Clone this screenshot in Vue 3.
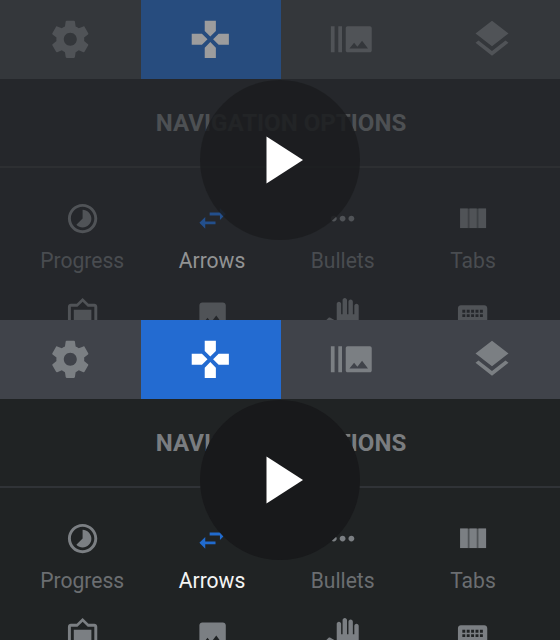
<script setup>
const tabs = [
  { name: 'settings', d: 'M19.43 12.98c.04-.32.07-.64.07-.98s-.03-.66-.07-.98l2.11-1.65c.19-.15.24-.42.12-.64l-2-3.46c-.12-.22-.39-.3-.61-.22l-2.49 1c-.52-.4-1.08-.73-1.69-.98l-.38-2.65C14.46 2.18 14.25 2 14 2h-4c-.25 0-.46.18-.49.42l-.38 2.65c-.61.25-1.17.59-1.69.98l-2.49-1c-.23-.09-.49 0-.61.22l-2 3.46c-.13.22-.07.49.12.64l2.11 1.65c-.04.32-.07.65-.07.98s.03.66.07.98l-2.11 1.65c-.19.15-.24.42-.12.64l2 3.46c.12.22.39.3.61.22l2.49-1c.52.4 1.08.73 1.69.98l.38 2.65c.03.24.24.42.49.42h4c.25 0 .46-.18.49-.42l.38-2.65c.61-.25 1.17-.59 1.69-.98l2.49 1c.23.09.49 0 .61-.22l2-3.46c.12-.22.07-.49-.12-.64l-2.11-1.65zM12 15.5c-1.93 0-3.5-1.57-3.5-3.5s1.57-3.5 3.5-3.5 3.5 1.57 3.5 3.5-1.57 3.5-3.5 3.5z' },
  { name: 'navigation', active: true, d: 'M15 7.5V2H9v5.5l3 3 3-3zM7.5 9H2v6h5.5l3-3-3-3zM9 16.5V22h6v-5.5l-3-3-3 3zM16.5 9l-3 3 3 3H22V9h-5.500z' },
  { name: 'slides', d: 'M1 5h2v14H1zm4 0h2v14H5zm17 0H10c-.55 0-1 .45-1 1v12c0 .55.45 1 1 1h12c.55 0 1-.45 1-1V6c0-.55-.45-1-1-1zM11 17l2.500-3.150L15.290 16l2.500-3.220L21 17H11z' },
  { name: 'layers', d: 'M11.990 18.540l-7.370-5.730L3 14.070l9 7 9-7-1.630-1.270-7.380 5.740zM12 16l7.360-5.730L21 9l-9-7-9 7 1.630 1.270L12 16z' },
]
const options = [
  { label: 'Progress', d: 'M16.240 7.760C15.070 6.590 13.540 6 12 6v6l-4.240 4.240c2.340 2.340 6.140 2.340 8.490 0 2.340-2.340 2.340-6.140-.010-8.480zM12 2C6.480 2 2 6.480 2 12s4.480 10 10 10 10-4.480 10-10S17.520 2 12 2zm0 18c-4.420 0-8-3.580-8-8s3.580-8 8-8 8 3.580 8 8-3.580 8-8 8z' },
  { label: 'Arrows', active: true, d: 'M6.990 10.900L3 14.900l3.990 4v-3H14v-2H6.990v-3zM21 8.900l-3.990-4v3H10v2h7.010v3L21 8.900z' },
  { label: 'Bullets', d: 'M6 10c-1.100 0-2 .9-2 2s.9 2 2 2 2-.9 2-2-.9-2-2-2zm12 0c-1.100 0-2 .9-2 2s.9 2 2 2 2-.9 2-2-.9-2-2-2zm-6 0c-1.100 0-2 .9-2 2s.9 2 2 2 2-.9 2-2-.9-2-2-2z' },
  { label: 'Tabs', columns: true },
]
const extras = [
  { name: 'frame', d: 'M20 4h-4l-4-4-4 4H4c-1.100 0-2 .9-2 2v14c0 1.100.9 2 2 2h16c1.100 0 2-.9 2-2V6c0-1.100-.9-2-2-2zm0 16H4V6h4.520l3.520-3.500L15.520 6H20v14zM18 8H6v10h12z' },
  { name: 'image', d: 'M21 19V5c0-1.100-.9-2-2-2H5c-1.100 0-2 .9-2 2v14c0 1.100.9 2 2 2h14c1.100 0 2-.9 2-2zM8.500 13.500l2.500 3.010L14.500 12l4.500 6H5l3.500-4.500z' },
  { name: 'hand', d: 'M23 5.500V20c0 2.200-1.800 4-4 4h-7.300c-1.080 0-2.100-.43-2.850-1.190L1 14.830s1.260-1.230 1.300-1.250c.22-.19.49-.29.79-.29.22 0 .42.06.6.16.04.01 4.310 2.460 4.310 2.460V4c0-.83.67-1.500 1.500-1.500S11 3.170 11 4v7h1V1.500c0-.83.67-1.500 1.500-1.500S15 .67 15 1.500V11h1V2.500c0-.83.67-1.500 1.500-1.500s1.500.67 1.500 1.500V11h1V5.500c0-.83.67-1.500 1.500-1.500s1.500.67 1.500 1.500z' },
  { name: 'keyboard', d: 'M20 5H4c-1.100 0-1.990.9-1.990 2L2 17c0 1.100.9 2 2 2h16c1.100 0 2-.9 2-2V7c0-1.100-.9-2-2-2zm-9 3h2v2h-2V8zm0 3h2v2h-2v-2zM8 8h2v2H8V8zm0 3h2v2H8v-2zm-1 2H5v-2h2v2zm0-3H5V8h2v2zm9 7H8v-2h8v2zm0-4h-2v-2h2v2zm0-3h-2V8h2v2zm3 3h-2v-2h2v2zm0-3h-2V8h2v2z' },
]
</script>

<template>
  <main class="page">
    <section v-for="state in ['dimmed', 'bright']" :key="state" class="panel" :class="state">
      <nav class="tabs">
        <div v-for="t in tabs" :key="t.name" class="tab" :class="[{ active: t.active }, t.name]">
          <svg viewBox="0 0 24 24"><path :d="t.d" /></svg>
        </div>
      </nav>
      <h2><span>NAVIGATION OPTIONS</span></h2>
      <div class="options">
        <div v-for="o in options" :key="o.label" class="option" :class="{ active: o.active }">
          <svg v-if="o.columns" viewBox="0 0 24 24">
            <path class="gap" d="M3.500 5.200h17.700v13.300H3.500z" />
            <path d="M3.500 5.200h5.200v13.300H3.500zM9.900 5.200h4.900v13.300H9.900zM16 5.200h5.200v13.300H16z" />
          </svg>
          <svg v-else viewBox="0 0 24 24"><path :d="o.d" /></svg>
          <span>{{ o.label }}</span>
        </div>
      </div>
      <div class="extras">
        <div v-for="e in extras" :key="e.name" class="extra">
          <svg viewBox="0 0 24 24"><path :d="e.d" /></svg>
        </div>
      </div>
      <div class="play">
        <svg viewBox="0 0 160 160"><path d="M66.500 56.500v47L103 80z" /></svg>
      </div>
    </section>
  </main>
</template>

<style>
body { margin: 0; }
</style>

<style scoped>
.page { width: 560px; height: 640px; font-family: Roboto, sans-serif; }
.panel {
  position: relative;
  height: 320px;
  overflow: hidden;
  background: var(--bg);
}
.dimmed {
  --bg: #25272b; --bar: #34373b; --blue: #274c7e; --arrow: #234f8c; --icon: #505357;
  --label: #494c50; --title: #4d5053; --on: #9c9c9d; --text-on: #929394;
  --line: #2d2f32; --disc: rgba(27, 28, 31, 0.85); --gap: #3d4044;
}
.bright {
  --bg: #202324; --bar: #40434a; --blue: #236bd1; --arrow: #216bce; --icon: #7b7f83;
  --label: #6b6e71; --title: #7a7d80; --on: #fff; --text-on: #f4f4f4;
  --line: #303337; --disc: #18191b; --gap: #505457;
}
svg { display: block; fill: currentColor; }
.tabs {
  display: grid;
  grid-template-columns: 140.6px 140.4px 140.5px 1fr;
  height: 78.5px;
  background: var(--bar);
  color: var(--icon);
}
.tab { display: flex; align-items: center; justify-content: center; }
.tab svg { width: 44.6px; height: 44.6px; }
.tab.layers svg { width: 44px; height: 44px; margin-left: 2px; }
.tab.active { background: var(--blue); color: var(--on); }
h2 {
  display: flex;
  align-items: center;
  justify-content: center;
  box-sizing: border-box;
  height: 89.5px;
  margin: 0;
  padding: 2px 0 0 2px;
  border-bottom: 2px solid var(--line);
  color: var(--title);
  font-size: 24.1px;
  font-weight: 700;
  line-height: 28px;
  white-space: nowrap;
}
.options, .extras {
  display: grid;
  grid-template-columns: repeat(4, 130px);
  padding-left: 17.5px;
}
.options { padding-top: 33px; height: 96.5px; box-sizing: border-box; }
.option, .extra { display: flex; flex-direction: column; align-items: center; color: var(--icon); }
.option svg, .extra svg { width: 35.2px; height: 35.2px; }
.option span {
  margin-top: 11px;
  color: var(--label);
  font-size: 22.2px;
  line-height: 26px;
  transform: scaleX(0.95);
}
.option.active { color: var(--arrow); }
.option.active span { color: var(--text-on); }
.gap { fill: var(--gap); }
.extras { padding-top: 33px; }
.play {
  position: absolute;
  left: 200px;
  top: 80px;
  width: 160px;
  height: 160px;
  border-radius: 50%;
  background: var(--disc);
  color: #fff;
}
</style>
